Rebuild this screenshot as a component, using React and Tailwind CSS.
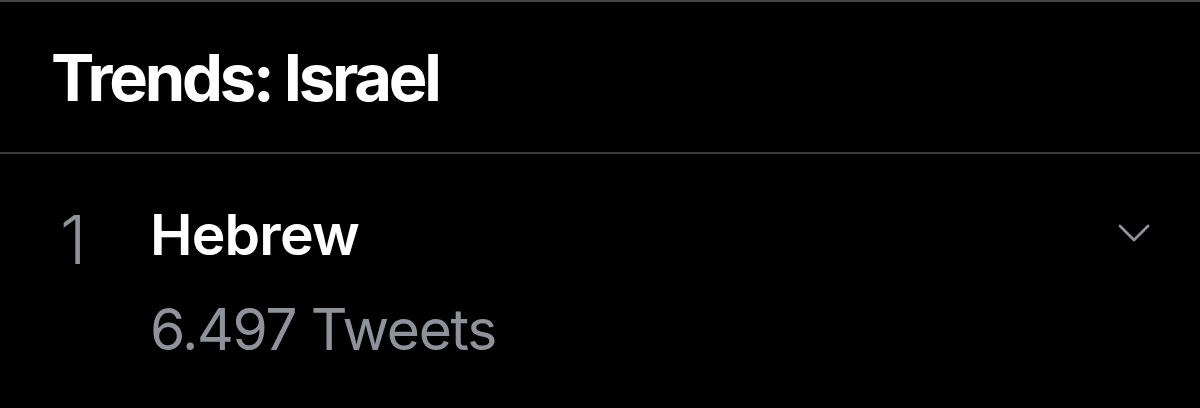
export default function App() {
    return (
        <div className="w-[1200px] h-[408px] bg-black overflow-hidden font-['Inter',sans-serif] border-t-2 border-[#48484a]">
            {/* Header */}
            <div className="h-[152px] flex items-center pl-[51px] border-b-2 border-[#3c3c3e]">
                <h1 className="text-[65px] font-bold text-white tracking-[-3.2px] leading-none">Trends: Israel</h1>
            </div>

            {/* Trend row */}
            <div className="flex pt-[52px]">
                <div className="w-[150px] pl-[60px] text-[67px] font-light text-[#8e9299] leading-none">1</div>
                <div className="flex-1">
                    <div className="text-[57px] font-semibold text-white leading-none tracking-[-0.8px]">Hebrew</div>
                    <div className="text-[57px] text-[#8e939b] leading-none mt-[38px] tracking-[-1.4px]">6.497 Tweets</div>
                </div>
                <div className="pr-[50px] pt-[18px]">
                    <svg width="32" height="20" viewBox="0 0 32 20" fill="none" stroke="#8e939b" strokeWidth="2.8" strokeLinecap="round" strokeLinejoin="round">
                        <path d="M2 2 L16 16 L30 2" />
                    </svg>
                </div>
            </div>
        </div>
    );
}
